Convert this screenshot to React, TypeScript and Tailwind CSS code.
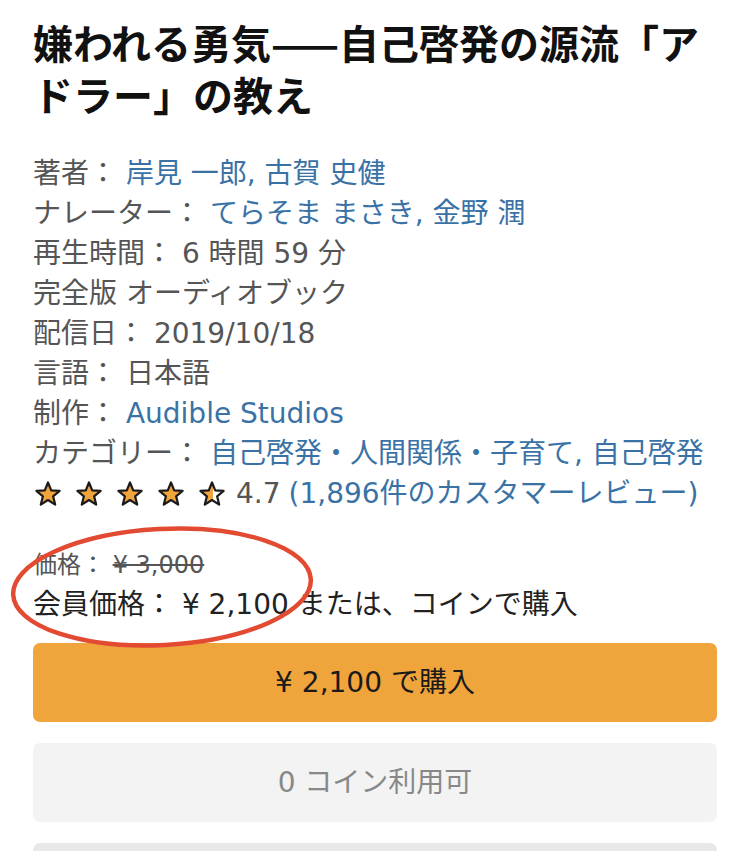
import React from "react";

const titleFont = { fontFamily: '"Noto Sans CJK JP", "Noto Sans", sans-serif' };
const bodyFont = { fontFamily: '"DejaVu Sans", "Noto Sans CJK JP", sans-serif' };

function Star({ half }: { half?: boolean }) {
  const d =
    "M14 2.5 L17.2 10.4 L25.6 10.9 L19.1 16.3 L21.2 24.6 L14 20 L6.8 24.6 L8.9 16.3 L2.4 10.9 L10.8 10.4 Z";
  return (
    <svg width="28" height="28" viewBox="0 0 28 28">
      {half ? (
        <>
          <defs>
            <clipPath id="halfclip">
              <rect x="0" y="0" width="15" height="28" />
            </clipPath>
          </defs>
          <path d={d} fill="#ffffff" />
          <path d={d} fill="#f0a43c" clipPath="url(#halfclip)" />
        </>
      ) : (
        <path d={d} fill="#f0a43c" />
      )}
      <path d={d} fill="none" stroke="#1a1a1a" strokeWidth="2.2" strokeLinejoin="round" />
    </svg>
  );
}

function Row({ label, children }: { label: string; children?: React.ReactNode }) {
  return (
    <div className="h-[40px] leading-[40px] whitespace-nowrap">
      <span className="text-[#555]">{label}</span>
      {children}
    </div>
  );
}

const Link = ({ children }: { children: React.ReactNode }) => (
  <span className="text-[#3b72a6]">{children}</span>
);

export default function App() {
  return (
    <div className="w-[750px] h-[851px] bg-white overflow-hidden relative" style={bodyFont}>
      <div className="px-[33px] pt-[16px]">
        <h1 className="font-bold text-[#111] text-[40px] whitespace-nowrap" style={titleFont}>
          <div className="h-[52px] leading-[52px]">嫌われる勇気——自己啓発の源流「ア</div>
          <div className="h-[52px] leading-[52px]">ドラー」の教え</div>
        </h1>
        <div className="mt-[34px] text-[28px] text-[#555]">
          <Row label="著者： ">
            <Link>岸見 一郎, 古賀 史健</Link>
          </Row>
          <Row label="ナレーター： ">
            <Link>てらそま まさき, 金野 潤</Link>
          </Row>
          <Row label="再生時間： ">
            <span>6 時間 59 分</span>
          </Row>
          <Row label="完全版 オーディオブック" />
          <Row label="配信日： ">
            <span>2019/10/18</span>
          </Row>
          <Row label="言語： ">
            <span>日本語</span>
          </Row>
          <Row label="制作： ">
            <Link>Audible Studios</Link>
          </Row>
          <Row label="カテゴリー： ">
            <Link>自己啓発・人間関係・子育て, 自己啓発</Link>
          </Row>
          <div className="h-[40px] flex items-center whitespace-nowrap">
            <div className="flex gap-[13px] ml-[1px]">
              <Star />
              <Star />
              <Star />
              <Star />
              <Star half />
            </div>
            <span className="ml-[10px] text-[#555]">4.7</span>
            <span className="ml-[8px] text-[#3b72a6]">(1,896件のカスタマーレビュー)</span>
          </div>
        </div>

        <div className="mt-[31px]">
          <div className="h-[40px] leading-[40px] text-[24px] text-[#555] whitespace-nowrap">
            価格： <span className="line-through">¥ 3,000</span>
          </div>
          <div className="h-[40px] leading-[40px] text-[28px] text-[#222] whitespace-nowrap">
            会員価格： ¥ 2,100 または、コインで購入
          </div>
        </div>

        <div className="mt-[18px] h-[79px] rounded-[7px] bg-[#f0a43c] flex items-center justify-center text-[28px] text-[#1a1a1a]">
          ¥ 2,100 で購入
        </div>
        <div className="mt-[21px] h-[79px] rounded-[7px] bg-[#f3f3f3] flex items-center justify-center text-[28px] text-[#888]">
          0 コイン利用可
        </div>
        <div className="mt-[21px] h-[79px] rounded-[7px] bg-[#e8e8e8]" />
      </div>

      <svg
        className="absolute left-0 top-0 pointer-events-none"
        width="750"
        height="851"
        viewBox="0 0 750 851"
      >
        <ellipse
          cx="162"
          cy="587"
          rx="149"
          ry="58"
          transform="rotate(-3 162 587)"
          fill="none"
          stroke="#e24a32"
          strokeWidth="4.5"
        />
      </svg>
    </div>
  );
}
